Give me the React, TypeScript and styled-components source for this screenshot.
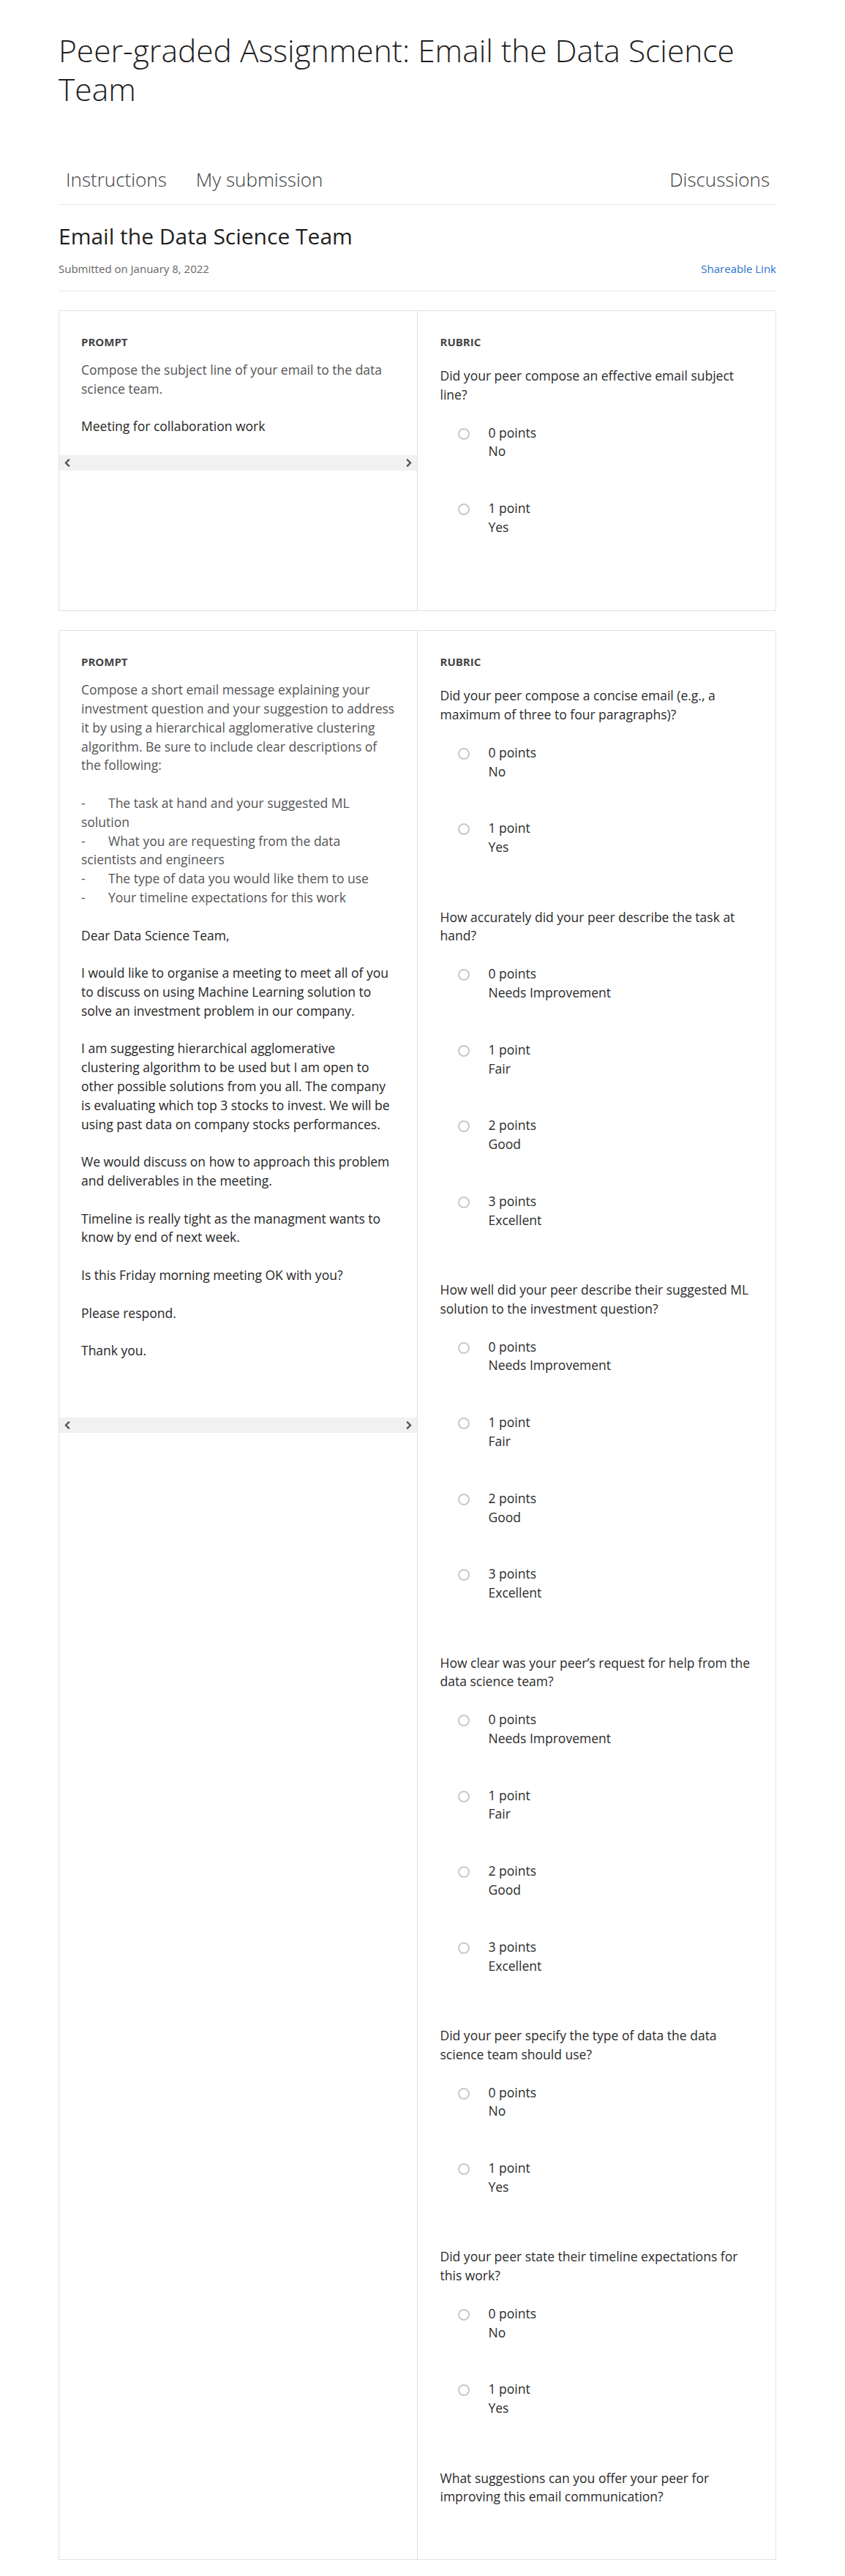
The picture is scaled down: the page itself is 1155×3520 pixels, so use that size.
import React from "react";
import styled, { createGlobalStyle } from "styled-components";

const GlobalStyle = createGlobalStyle`
  html, body { margin: 0; padding: 0; background: #ffffff; }
  body {
    font-family: "Open Sans", "Liberation Sans", Arial, sans-serif;
    color: #1f1f1f;
    -webkit-font-smoothing: antialiased;
  }
  *, *::before, *::after { box-sizing: border-box; }
  p { margin: 0; }
`;

const Page = styled.main`
  width: 1155px;
  padding: 42px 94px 21px 80px;
`;

const PageTitle = styled.h1`
  margin: 0;
  font-size: 42.5px;
  line-height: 53px;
  font-weight: 300;
  color: #1f1f1f;
`;

const TabBar = styled.nav`
  margin-top: 79px;
  display: flex;
  align-items: center;
  gap: 40px;
  padding: 0 9px 16px 10px;
  border-bottom: 1px solid #e6e6e6;
`;

const Tab = styled.a<{ $push?: boolean }>`
  font-size: 26px;
  line-height: 36px;
  font-weight: 300;
  color: #3c3c3c;
  text-decoration: none;
  margin-left: ${(p) => (p.$push ? "auto" : "0")};
`;

const SubmissionHeader = styled.header`
  padding: 23px 0 19.5px;
  border-bottom: 1px solid #e6e6e6;
`;

const SubmissionTitle = styled.h2`
  margin: 0;
  font-size: 30px;
  line-height: 40px;
  font-weight: 400;
  color: #1f1f1f;
`;

const MetaRow = styled.div`
  margin-top: 12.5px;
  display: flex;
  justify-content: space-between;
  align-items: center;
  font-size: 15px;
  line-height: 22px;
`;

const SubmittedOn = styled.span`
  color: #666666;
`;

const ShareLink = styled.a`
  color: #2a73cc;
  text-decoration: none;
`;

const CardList = styled.div`
  margin-top: 26px;
  display: flex;
  flex-direction: column;
  gap: 26px;
`;

const Card = styled.section`
  display: grid;
  grid-template-columns: 1fr 1fr;
  border: 1px solid #e1e1e1;
`;

const PromptColumn = styled.div`
  border-right: 1px solid #e1e1e1;
  display: flex;
  flex-direction: column;
  min-width: 0;
`;

const PromptBody = styled.div<{ $extra?: number }>`
  padding: 32px 30px ${(p) => 26 + (p.$extra ?? 0)}px 30px;
`;

const SectionLabel = styled.div<{ $gap: number }>`
  font-size: 15px;
  line-height: 20px;
  font-weight: 700;
  color: #454545;
  margin-bottom: ${(p) => p.$gap}px;
`;

const PromptText = styled.div`
  font-size: 17.5px;
  line-height: 25.8px;
  color: #555555;
`;

const Bullet = styled.span`
  display: inline-block;
  width: 37px;
`;

const Response = styled.div`
  margin-top: 25.8px;
  font-size: 17.5px;
  line-height: 25.8px;
  color: #262626;
  display: flex;
  flex-direction: column;
  gap: 25.8px;
`;

const ScrollTrack = styled.div`
  height: 21px;
  background: #f1f1f1;
  display: flex;
  align-items: center;
  justify-content: space-between;
  padding: 0 7px;
  color: #555555;
`;

const RubricColumn = styled.div`
  padding: 32px 31px 31px 31px;
  min-width: 0;
`;

const RubricItem = styled.div<{ $open?: boolean }>`
  margin-bottom: ${(p) => (p.$open ? 41 : 69.5)}px;
`;

const Question = styled.p<{ $open?: boolean }>`
  font-size: 17.5px;
  line-height: 25.8px;
  color: #2b2b2b;
  margin-bottom: ${(p) => (p.$open ? 0 : 26)}px;
`;

const OptionList = styled.div`
  display: flex;
  flex-direction: column;
  gap: 52px;
`;

const Option = styled.label`
  display: flex;
  align-items: flex-start;
  gap: 26px;
  padding-left: 24px;
  font-size: 17.5px;
  line-height: 25.8px;
  color: #2b2b2b;
`;

const Radio = styled.span`
  flex: none;
  width: 16px;
  height: 16px;
  margin-top: 6px;
  border-radius: 50%;
  border: 2px solid #c9c9cc;
  background: #ffffff;
`;

const OptionText = styled.div`
  display: flex;
  flex-direction: column;
`;

const Chevron = ({ dir }: { dir: "left" | "right" }) => (
  <svg width="8" height="11" viewBox="0 0 8 11" aria-hidden="true">
    <path
      d={dir === "left" ? "M6 1.5 L2 5.5 L6 9.5" : "M2 1.5 L6 5.5 L2 9.5"}
      fill="none"
      stroke="currentColor"
      strokeWidth="2.4"
      strokeLinecap="square"
      strokeLinejoin="miter"
    />
  </svg>
);

type Opt = { points: string; label: string };
type Criterion = { q: string; options: Opt[] };

const yesNo: Opt[] = [
  { points: "0 points", label: "No" },
  { points: "1 point", label: "Yes" },
];

const fourScale: Opt[] = [
  { points: "0 points", label: "Needs Improvement" },
  { points: "1 point", label: "Fair" },
  { points: "2 points", label: "Good" },
  { points: "3 points", label: "Excellent" },
];

const rubric2: Criterion[] = [
  { q: "Did your peer compose a concise email (e.g., a maximum of three to four paragraphs)?", options: yesNo },
  { q: "How accurately did your peer describe the task at hand?", options: fourScale },
  { q: "How well did your peer describe their suggested ML solution to the investment question?", options: fourScale },
  { q: "How clear was your peer’s request for help from the data science team?", options: fourScale },
  { q: "Did your peer specify the type of data the data science team should use?", options: yesNo },
  { q: "Did your peer state their timeline expectations for this work?", options: yesNo },
  { q: "What suggestions can you offer your peer for improving this email communication?", options: [] },
];

const Rubric = ({ items }: { items: Criterion[] }) => (
  <RubricColumn>
    <SectionLabel $gap={24}>RUBRIC</SectionLabel>
    {items.map((c) => {
      const open = c.options.length === 0;
      return (
        <RubricItem key={c.q} $open={open}>
          <Question $open={open}>{c.q}</Question>
          {!open && (
            <OptionList>
              {c.options.map((o) => (
                <Option key={o.points}>
                  <Radio />
                  <OptionText>
                    <span>{o.points}</span>
                    <span>{o.label}</span>
                  </OptionText>
                </Option>
              ))}
            </OptionList>
          )}
        </RubricItem>
      );
    })}
  </RubricColumn>
);

const Scrollbar = () => (
  <ScrollTrack>
    <Chevron dir="left" />
    <Chevron dir="right" />
  </ScrollTrack>
);

export default function App() {
  return (
    <>
      <GlobalStyle />
      <Page>
        <PageTitle>Peer-graded Assignment: Email the Data Science Team</PageTitle>
        <TabBar>
          <Tab href="#">Instructions</Tab>
          <Tab href="#">My submission</Tab>
          <Tab href="#" $push>
            Discussions
          </Tab>
        </TabBar>
        <SubmissionHeader>
          <SubmissionTitle>Email the Data Science Team</SubmissionTitle>
          <MetaRow>
            <SubmittedOn>Submitted on January 8, 2022</SubmittedOn>
            <ShareLink href="#">Shareable Link</ShareLink>
          </MetaRow>
        </SubmissionHeader>

        <CardList>
          <Card>
            <PromptColumn>
              <PromptBody>
                <SectionLabel $gap={16}>PROMPT</SectionLabel>
                <PromptText>Compose the subject line of your email to the data science team.</PromptText>
                <Response>
                  <p>Meeting for collaboration work</p>
                </Response>
              </PromptBody>
              <Scrollbar />
            </PromptColumn>
            <Rubric
              items={[{ q: "Did your peer compose an effective email subject line?", options: yesNo }]}
            />
          </Card>

          <Card>
            <PromptColumn>
              <PromptBody $extra={51.6}>
                <SectionLabel $gap={16}>PROMPT</SectionLabel>
                <PromptText>
                  Compose a short email message explaining your investment question and your suggestion to
                  address it by using a hierarchical agglomerative clustering algorithm. Be sure to include
                  clear descriptions of the following:
                  <br />
                  <br />
                  <Bullet>-</Bullet>The task at hand and your suggested ML solution
                  <br />
                  <Bullet>-</Bullet>What you are requesting from the data scientists and engineers
                  <br />
                  <Bullet>-</Bullet>The type of data you would like them to use
                  <br />
                  <Bullet>-</Bullet>Your timeline expectations for this work
                </PromptText>
                <Response>
                  <p>Dear Data Science Team,</p>
                  <p>
                    I would like to organise a meeting to meet all of you to discuss on using Machine
                    Learning solution to solve an investment problem in our company.
                  </p>
                  <p>
                    I am suggesting hierarchical agglomerative clustering algorithm to be used but I am open
                    to other possible solutions from you all. The company is evaluating which top 3 stocks to
                    invest. We will be using past data on company stocks performances.
                  </p>
                  <p>We would discuss on how to approach this problem and deliverables in the meeting.</p>
                  <p>Timeline is really tight as the managment wants to know by end of next week.</p>
                  <p>Is this Friday morning meeting OK with you?</p>
                  <p>Please respond.</p>
                  <p>Thank you.</p>
                </Response>
              </PromptBody>
              <Scrollbar />
            </PromptColumn>
            <Rubric items={rubric2} />
          </Card>
        </CardList>
      </Page>
    </>
  );
}
